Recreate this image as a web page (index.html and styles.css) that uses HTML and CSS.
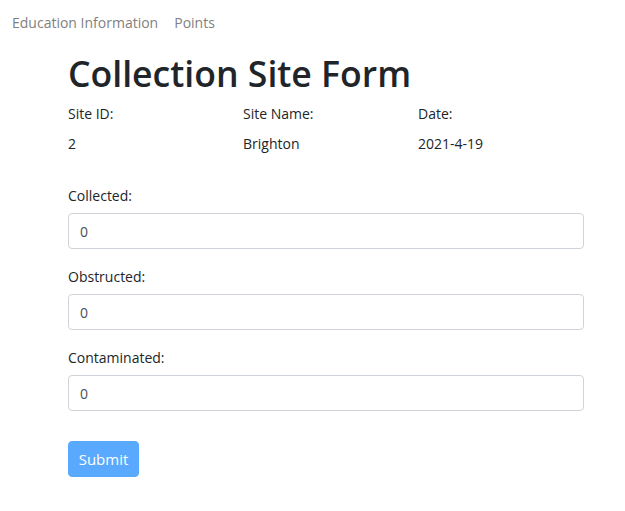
FILE: index.html
```html
<!DOCTYPE html>
<html>
<head>
<meta charset="utf-8">
<link rel="stylesheet" href="styles.css">
</head>
<body>
<nav class="nav">
  <a class="nav-link">Education Information</a>
  <a class="nav-link">Points</a>
</nav>
<main class="container">
  <h1 class="title">Collection Site Form</h1>
  <div class="info">
    <div class="cell">Site ID:</div>
    <div class="cell">Site Name:</div>
    <div class="cell">Date:</div>
    <div class="cell">2</div>
    <div class="cell">Brighton</div>
    <div class="cell">2021-4-19</div>
  </div>
  <form class="form">
    <div class="group">
      <label class="label">Collected:</label>
      <input class="input" type="text" value="0">
    </div>
    <div class="group">
      <label class="label">Obstructed:</label>
      <input class="input" type="text" value="0">
    </div>
    <div class="group">
      <label class="label">Contaminated:</label>
      <input class="input" type="text" value="0">
    </div>
    <button class="btn" type="button">Submit</button>
  </form>
</main>
</body>
</html>
```
FILE: styles.css
```css
* { box-sizing: border-box; }
html, body { margin: 0; padding: 0; background: #fff; }
body {
  font-family: "Open Sans", "Noto Sans", sans-serif;
  font-size: 14px;
  color: #212529;
  width: 625px;
}
.nav {
  display: flex;
  padding: 12px 12px 0;
  gap: 16px;
}
.nav-link {
  color: #7f7f7f;
  font-size: 14px;
  line-height: 22px;
}
.container {
  margin-left: 68px;
  width: 516px;
}
.title {
  margin: 16px 0 0;
  font-size: 35.6px;
  font-weight: 600;
  line-height: 46px;
}
.info {
  display: grid;
  grid-template-columns: 175px 175px 175px;
  row-gap: 8px;
  margin-top: 7px;
  line-height: 22px;
}
.form {
  margin-top: 30px;
}
.group {
  display: flex;
  flex-direction: column;
  margin-bottom: 17px;
}
.label {
  line-height: 22px;
  margin-bottom: 6px;
}
.input {
  height: 36px;
  width: 100%;
  border: 1px solid #ced4da;
  border-radius: 4px;
  padding: 0 11px;
  font-family: inherit;
  font-size: 14px;
  color: #495057;
}
.btn {
  margin-top: 13px;
  width: 71px;
  height: 36px;
  background: #59a9ff;
  border: 1px solid #59a9ff;
  border-radius: 4px;
  color: #fff;
  font-family: inherit;
  font-size: 15px;
  padding: 0;
}
```
